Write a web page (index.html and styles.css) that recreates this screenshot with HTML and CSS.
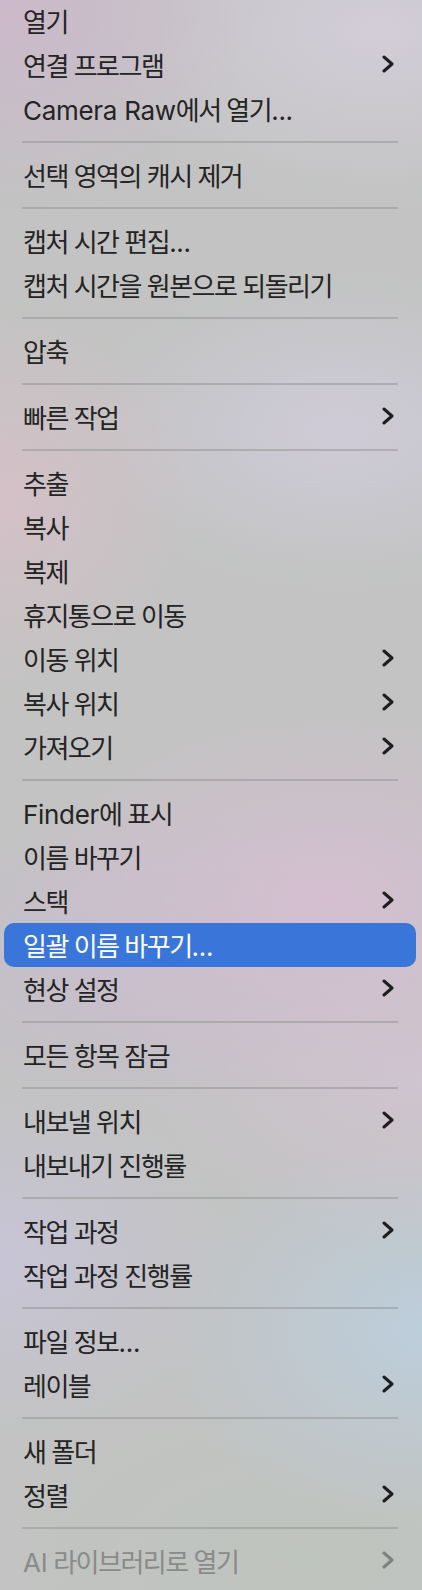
FILE: index.html
```html
<!DOCTYPE html>
<html lang="ko">
<head>
    <meta charset="UTF-8">
    <meta name="viewport" content="width=device-width, initial-scale=1.0">
    <title>Context Menu</title>
    <link rel="stylesheet" href="styles.css">
</head>
<body>
    <div class="menu">
        <div class="item">열기</div>
        <div class="item sub">연결 프로그램</div>
        <div class="item"><span><span class="latin">Camera Raw</span>에서 열기<span class="latin">...</span></span></div>
        <div class="sep"></div>
        <div class="item">선택 영역의 캐시 제거</div>
        <div class="sep"></div>
        <div class="item"><span>캡처 시간 편집<span class="latin">...</span></span></div>
        <div class="item">캡처 시간을 원본으로 되돌리기</div>
        <div class="sep"></div>
        <div class="item">압축</div>
        <div class="sep"></div>
        <div class="item sub">빠른 작업</div>
        <div class="sep"></div>
        <div class="item">추출</div>
        <div class="item">복사</div>
        <div class="item">복제</div>
        <div class="item">휴지통으로 이동</div>
        <div class="item sub">이동 위치</div>
        <div class="item sub">복사 위치</div>
        <div class="item sub">가져오기</div>
        <div class="sep"></div>
        <div class="item"><span><span class="latin">Finder</span>에 표시</span></div>
        <div class="item">이름 바꾸기</div>
        <div class="item sub">스택</div>
        <div class="item active"><span>일괄 이름 바꾸기<span class="latin">...</span></span></div>
        <div class="item sub">현상 설정</div>
        <div class="sep"></div>
        <div class="item">모든 항목 잠금</div>
        <div class="sep"></div>
        <div class="item sub">내보낼 위치</div>
        <div class="item">내보내기 진행률</div>
        <div class="sep"></div>
        <div class="item sub">작업 과정</div>
        <div class="item">작업 과정 진행률</div>
        <div class="sep"></div>
        <div class="item"><span>파일 정보<span class="latin">...</span></span></div>
        <div class="item sub">레이블</div>
        <div class="sep"></div>
        <div class="item">새 폴더</div>
        <div class="item sub">정렬</div>
        <div class="sep"></div>
        <div class="item sub disabled"><span><span class="latin">AI</span> 라이브러리로 열기</span></div>
    </div>
</body>
</html>
```

FILE: styles.css
```css
html, body {
    margin: 0;
    height: 100%;
}

body {
    font-family: Inter, "Noto Sans CJK KR", sans-serif;
    font-size: 26px;
    color: #242424;
    background-color: #c2c3c2;
    background-image:
        radial-gradient(ellipse 260px 220px at 0px 0px, rgba(205, 184, 204, 0.95), transparent),
        radial-gradient(ellipse 300px 180px at 380px 30px, rgba(212, 206, 218, 0.9), transparent),
        radial-gradient(ellipse 200px 200px at 0px 500px, rgba(214, 192, 200, 0.9), transparent),
        radial-gradient(ellipse 260px 160px at 340px 430px, rgba(208, 204, 218, 0.9), transparent),
        radial-gradient(ellipse 320px 200px at 330px 900px, rgba(214, 190, 210, 0.9), transparent),
        radial-gradient(ellipse 260px 160px at 120px 960px, rgba(200, 188, 206, 0.8), transparent),
        radial-gradient(ellipse 300px 160px at 420px 1080px, rgba(210, 196, 210, 0.8), transparent),
        radial-gradient(ellipse 240px 180px at 0px 1260px, rgba(200, 196, 216, 0.9), transparent),
        radial-gradient(ellipse 260px 200px at 422px 1330px, rgba(188, 206, 220, 0.95), transparent),
        radial-gradient(ellipse 300px 160px at 300px 1560px, rgba(190, 196, 190, 0.9), transparent);
}

.menu {
    display: flex;
    flex-direction: column;
    margin-top: -1px;
}

.item {
    height: 44px;
    display: flex;
    align-items: center;
    justify-content: space-between;
    margin: 0 6px 0 4px;
    padding: 0 22px 2px 19px;
    box-sizing: border-box;
    border-radius: 10px;
    letter-spacing: -1.5px;
    white-space: nowrap;
}

.latin {
    letter-spacing: -0.3px;
}

.item.sub::after {
    content: "";
    width: 12px;
    height: 18px;
    background: url("data:image/svg+xml,%3Csvg xmlns='http://www.w3.org/2000/svg' width='12' height='18' viewBox='0 0 12 18'%3E%3Cpath d='M2 2 L10 9 L2 16' fill='none' stroke='%231e1e1e' stroke-width='3' stroke-linecap='round' stroke-linejoin='round'/%3E%3C/svg%3E") no-repeat center;
}

.item.active {
    background-color: #3a76d9;
    color: #fff;
}

.item.disabled {
    color: #8a8a8a;
}

.item.disabled::after {
    opacity: 0.4;
}

.sep {
    height: 2px;
    margin: 10px 24px 10px 22px;
    background-color: rgba(140, 140, 140, 0.45);
}
```
